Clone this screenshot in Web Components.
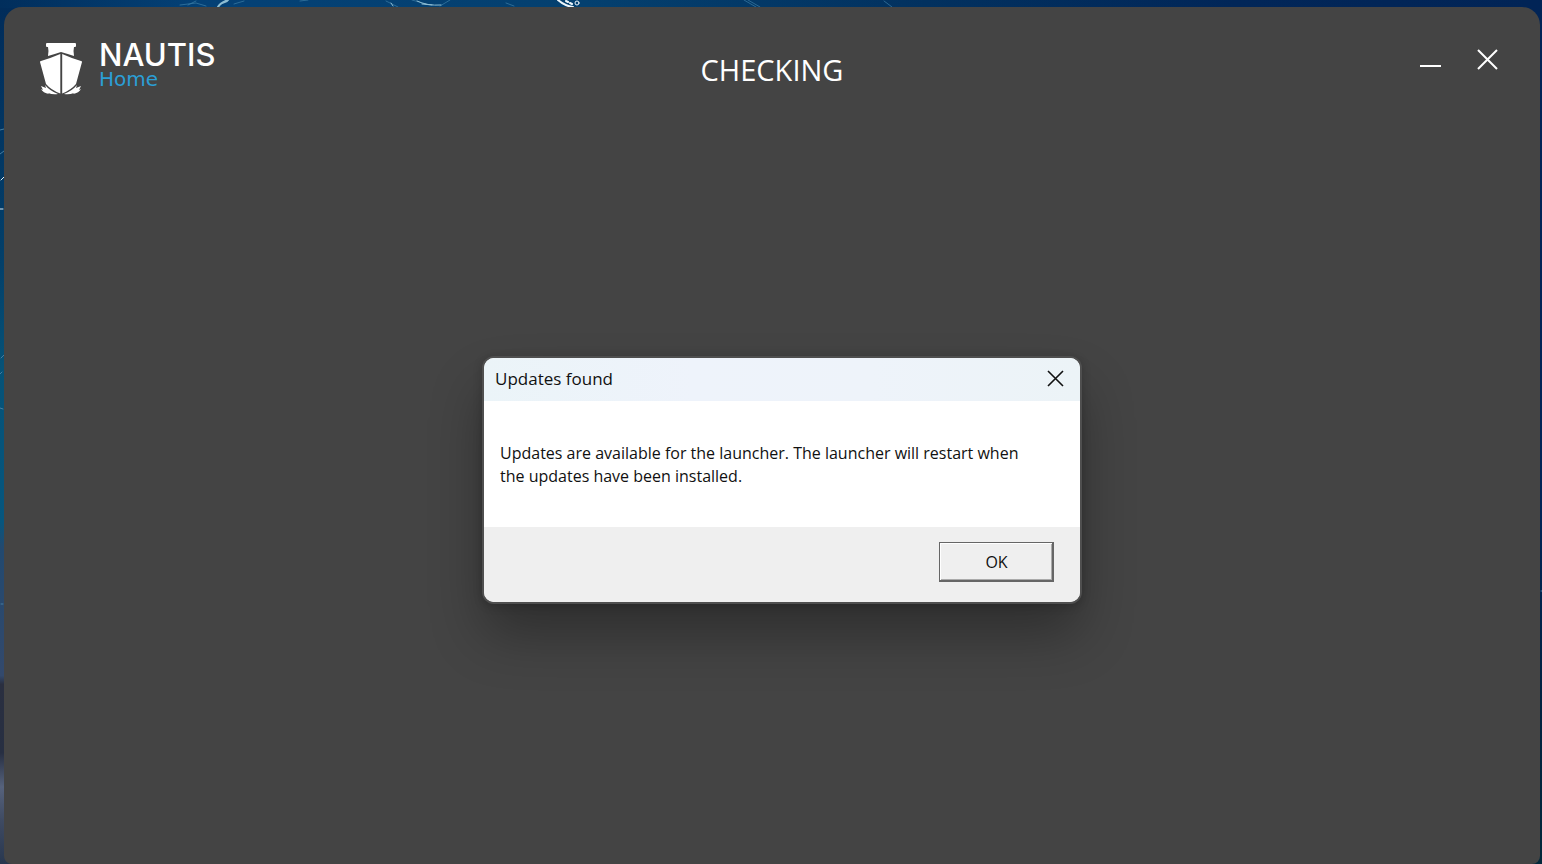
<!DOCTYPE html>
<html lang="en">
<head>
<meta charset="utf-8">
<title>NAUTIS Home</title>
<style>
html, body { margin: 0; height: 100%; }
body { font-family: "Open Sans", "Noto Sans", sans-serif; overflow: hidden; }
</style>
</head>
<body>
<desktop-backdrop>
  <launcher-window>
    <nautis-brand slot="brand"></nautis-brand>
    <span slot="title">CHECKING</span>
    <message-dialog slot="dialog">
      <span slot="title">Updates found</span>
      Updates are available for the launcher. The launcher will restart when the updates have been installed.
      <span slot="action">OK</span>
    </message-dialog>
  </launcher-window>
</desktop-backdrop>

<template id="backdrop">
<style>
:host { display: flex; position: relative; box-sizing: border-box; height: 100vh; padding: 7px 2px 0 4px; overflow: hidden; background: #012454; }
svg { position: absolute; inset: 0; width: 100%; height: 100%; }
::slotted(*) { flex: 1; }
</style>
<svg viewBox="0 0 1542 864" preserveAspectRatio="none" aria-hidden="true">
  <defs>
    <linearGradient id="top"><stop offset="0" stop-color="#012e5c"/><stop offset=".13" stop-color="#044176"/><stop offset=".38" stop-color="#04406f"/><stop offset=".6" stop-color="#02315f"/><stop offset=".8" stop-color="#012658"/><stop offset="1" stop-color="#012456"/></linearGradient>
    <linearGradient id="left" x2="0" y2="1"><stop offset="0" stop-color="#012c5a"/><stop offset=".3" stop-color="#03406a"/><stop offset=".42" stop-color="#065277"/><stop offset=".6" stop-color="#06567e"/><stop offset=".63" stop-color="#22496f"/><stop offset=".78" stop-color="#33496c"/><stop offset=".79" stop-color="#2a2f40"/><stop offset=".87" stop-color="#272f42"/><stop offset=".91" stop-color="#56627c"/><stop offset=".95" stop-color="#3e4a62"/><stop offset="1" stop-color="#28374f"/></linearGradient>
    <linearGradient id="right" x2="0" y2="1"><stop offset="0" stop-color="#012456"/><stop offset=".6" stop-color="#012556"/><stop offset=".82" stop-color="#022340"/><stop offset="1" stop-color="#03293b"/></linearGradient>
  </defs>
  <path fill="url(#top)" d="M0 0h1542v22H0z"/>
  <path fill="url(#left)" d="M0 8h20v856H0z"/>
  <path fill="url(#right)" d="M1522 0h20v864h-20z"/>
  <g fill="none" stroke-linecap="round">
    <path stroke="#3d7fa6" opacity=".7" d="M180 5l16-2 10 3M196 1l-8 4M234 4l10-3M300 1l8-1M386 1l12 6M412 0l14 4M440 6l10-6M514 6l-8-3M744 0l12 7M748 0l12 7M884 1l8 6"/>
    <path stroke="#8dbdd3" stroke-width="2" d="M218 7q2-4 10-7M222 3l5-2"/>
    <path stroke="#8dbdd3" d="M391 3l2 3M417 1q10 5 24 4M422 4l10 1"/>
    <path stroke="#eef6fb" stroke-width="2" d="M558 0q7 6 15 7M566 1l2 1M570 3l2 1"/>
    <circle cx="577" cy="3" r="2" stroke="#eef6fb"/>
    <path stroke="#e0edf4" d="M0 209h3M1 180l3-3"/>
    <path stroke="#467da0" d="M0 130l4-1M0 154l4-3M1 358l3-3M0 374l2-2M0 408l3 1M1 604h2M1541 591h1"/>
  </g>
</svg>
<slot></slot>
</template>

<template id="window">
<style>
:host { display: flex; flex-direction: column; position: relative; min-width: 0; background: #444; border-radius: 18px 18px 8px 8px; color: #fff; }
header { display: grid; grid-template-columns: 1fr auto 1fr; align-items: start; padding: 32px 34px 0; }
h1 { margin: 11px 0 0; font-size: 29px; line-height: 40px; font-weight: 400; }
nav { display: flex; justify-content: flex-end; gap: 28px; padding: 6px 4px 0 0; }
button { display: grid; place-items: center; width: 29px; height: 29px; padding: 0; border: 0; background: none; color: inherit; }
svg { width: 29px; height: 29px; fill: none; stroke: currentColor; stroke-width: 2; }
main { position: absolute; inset: 0; display: grid; place-items: center; padding: 89px 0 0 20px; pointer-events: none; }
::slotted(message-dialog) { pointer-events: auto; }
</style>
<header>
  <slot name="brand"></slot>
  <h1><slot name="title"></slot></h1>
  <nav aria-label="Window controls">
    <button type="button" aria-label="Minimize"><svg viewBox="0 0 29 29"><path d="M4 21h21"/></svg></button>
    <button type="button" aria-label="Close"><svg viewBox="0 0 29 29"><path d="M5 5l19 19M24 5L5 24"/></svg></button>
  </nav>
</header>
<main><slot name="dialog"></slot></main>
</template>

<template id="brand">
<style>
:host { display: flex; align-items: flex-start; gap: 15px; }
svg { width: 46px; height: 58px; fill: #fff; }
.name { display: flex; flex-direction: column; }
.name b { font: 500 31px/32px Inter, sans-serif; }
.name span { font: 400 20px/16px "DejaVu Sans", sans-serif; color: #2b9fd6; }
</style>
<svg viewBox="0 0 46 58" aria-hidden="true">
  <path d="M9 4h28q1 0 1 1v2q0 1-1 1h-1q-1 4 0 9-6-2-13-4-6 2-13 4 1-5 0-9H9Q8 8 8 7V5q0-1 1-1z"/>
  <path d="M22.300 15v39.500Q13 51 8 45L2 23q0-1 1-1 10-3 19.300-7z"/>
  <path d="M24.200 15v39.500Q33 51 38 45l6-22q0-1-1-1-10-3-18.800-7z"/>
  <path d="M3 47l5 2-1-3q5 6 13 9-5 1-10-1l1 1Q5 54 3 50l2 1zM43 47l-5 2 1-3q-5 6-13 9 5 1 10-1l-1 1q6-1 8-5l-2 1z"/>
</svg>
<div class="name"><b>NAUTIS</b><span>Home</span></div>
</template>

<template id="dialog">
<style>
:host { display: flex; flex-direction: column; width: 596px; max-width: 90vw; overflow: hidden; border-radius: 10px; background: #fff; color: #111; box-shadow: 0 0 0 2px #4f4f4f, 0 2px 10px 2px rgba(0,0,0,.2), 0 32px 54px rgba(0,0,0,.32); }
header { display: flex; align-items: center; justify-content: space-between; height: 41px; padding: 0 10px 2px 11px; background: linear-gradient(90deg, #ebf4f8, #eef3fb 35%, #eef3fa 65%, #ecf3f7); }
h2 { margin: 0; font-size: 17px; line-height: 24px; font-weight: 400; }
header button { width: 29px; height: 29px; padding: 0; border: 0; background: none; color: inherit; }
svg { display: block; width: 29px; height: 29px; fill: none; stroke: currentColor; stroke-width: 1.6; }
p { margin: 0; padding: 41px 40px 39px 16px; font-size: 16px; line-height: 23px; }
footer { display: flex; justify-content: flex-end; padding: 15px 26px 20px; background: #efefef; }
.action { width: 115px; height: 40px; padding: 1px 0 0 1px; border: 1px solid #666; border-width: 1px 2px 2px 1px; border-radius: 0; background: #efefef; color: inherit; font: 400 16px/24px "Open Sans", "Noto Sans", sans-serif; box-shadow: inset 1px 1px #fff, inset -1px -1px #aaa; }
</style>
<header>
  <h2><slot name="title"></slot></h2>
  <button type="button" aria-label="Close"><svg viewBox="0 0 29 29"><path d="M7 7l15 15M22 7L7 22"/></svg></button>
</header>
<p><slot></slot></p>
<footer><button type="button" class="action"><slot name="action"></slot></button></footer>
</template>

<script>
class TemplateElement extends HTMLElement {
  constructor() {
    super();
    const template = document.getElementById(this.constructor.template);
    this.attachShadow({ mode: "open" }).append(template.content.cloneNode(true));
  }
}
class DesktopBackdrop extends TemplateElement { static template = "backdrop"; }
class LauncherWindow extends TemplateElement { static template = "window"; }
class NautisBrand extends TemplateElement { static template = "brand"; }
class MessageDialog extends TemplateElement {
  static template = "dialog";
  connectedCallback() {
    this.setAttribute("role", "dialog");
    this.setAttribute("aria-label", "Updates found");
    for (const button of this.shadowRoot.querySelectorAll("button")) {
      button.addEventListener("click", () => this.remove());
    }
  }
}
customElements.define("desktop-backdrop", DesktopBackdrop);
customElements.define("launcher-window", LauncherWindow);
customElements.define("nautis-brand", NautisBrand);
customElements.define("message-dialog", MessageDialog);
</script>
</body>
</html>
